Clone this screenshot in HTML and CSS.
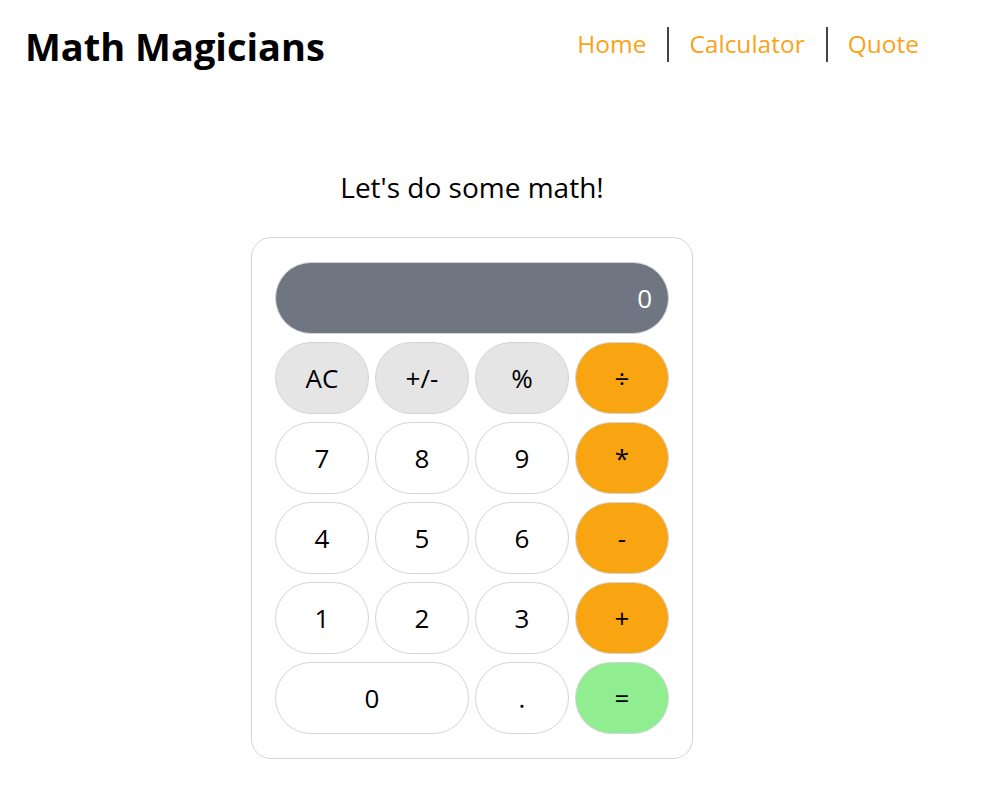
FILE: index.html
```html
<!DOCTYPE html>
<html>
<head>
<meta charset="utf-8">
<link rel="stylesheet" href="styles.css">
</head>
<body>
<header class="header">
  <h1 class="logo">Math Magicians</h1>
  <nav class="nav">
    <a class="nav-link" href="#">Home</a>
    <span class="sep"></span>
    <a class="nav-link" href="#">Calculator</a>
    <span class="sep"></span>
    <a class="nav-link" href="#">Quote</a>
  </nav>
</header>
<main class="main">
  <p class="intro">Let's do some math!</p>
  <div class="calc">
    <div class="display">0</div>
    <div class="keys">
      <button class="key gray">AC</button>
      <button class="key gray">+/-</button>
      <button class="key gray">%</button>
      <button class="key orange">÷</button>
      <button class="key">7</button>
      <button class="key">8</button>
      <button class="key">9</button>
      <button class="key orange">*</button>
      <button class="key">4</button>
      <button class="key">5</button>
      <button class="key">6</button>
      <button class="key orange">-</button>
      <button class="key">1</button>
      <button class="key">2</button>
      <button class="key">3</button>
      <button class="key orange">+</button>
      <button class="key wide">0</button>
      <button class="key">.</button>
      <button class="key green">=</button>
    </div>
  </div>
</main>
</body>
</html>
```

FILE: styles.css
```css
* { box-sizing: border-box; }
body {
  margin: 0;
  font-family: "Open Sans", "Noto Sans", sans-serif;
  color: #000;
  background: #fff;
}
.header {
  display: flex;
  justify-content: space-between;
  align-items: flex-start;
  padding: 18px 72px 0 25px;
  height: 90px;
}
.logo {
  margin: 0;
  padding-top: 5px;
  font-size: 38px;
  font-weight: 700;
  line-height: 46px;
}
.nav {
  display: flex;
  align-items: center;
  padding-top: 8px;
}
.nav-link {
  color: #f9a31a;
  text-decoration: none;
  font-size: 24.5px;
  line-height: 36px;
}
.sep {
  width: 2px;
  height: 35px;
  background: #444;
  margin: 0 20px 0 21px;
}
.main {
  display: flex;
  flex-direction: column;
  align-items: center;
  padding-top: 78px;
  padding-right: 47px;
}
.intro {
  margin: 0 0 31px 0;
  font-size: 28px;
  line-height: 38px;
}
.calc {
  width: 442px;
  border: 1px solid #d1d5db;
  border-radius: 20px;
  padding: 24px 23px;
  display: flex;
  flex-direction: column;
  gap: 8px;
}
.display {
  height: 72px;
  border-radius: 36px;
  background: #6f7681;
  border: 1px solid #d1d5db;
  color: #fff;
  font-size: 26px;
  display: flex;
  align-items: center;
  justify-content: flex-end;
  padding-right: 16px;
}
.keys {
  display: grid;
  grid-template-columns: repeat(4, 94px);
  grid-auto-rows: 72px;
  column-gap: 6px;
  row-gap: 8px;
}
.key {
  font-family: inherit;
  font-size: 26px;
  color: #000;
  background: #fff;
  border: 1px solid #d1d5db;
  border-radius: 36px;
  padding: 0;
}
.key.gray { background: #e5e5e5; }
.key.orange { background: #f9a411; }
.key.green { background: #90ee90; }
.key.wide { grid-column: span 2; }
```
